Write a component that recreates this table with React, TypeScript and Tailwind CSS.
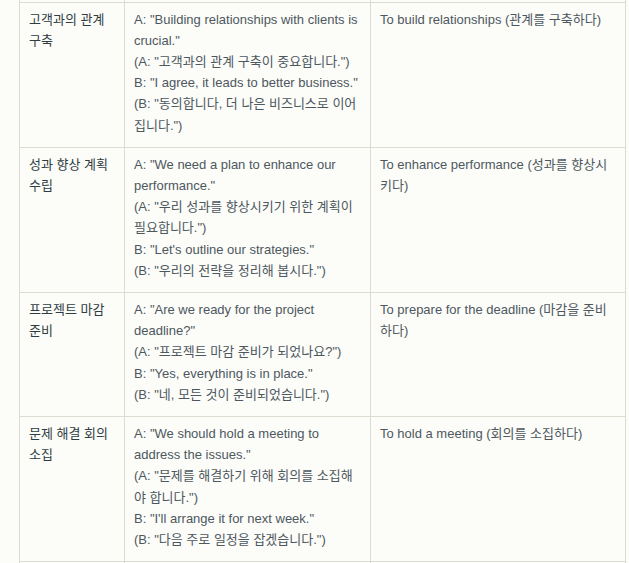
const rows = [
  {
    term: '고객과의 관계 구축',
    lines: [
      'A: "Building relationships with clients is crucial."',
      '(A: "고객과의 관계 구축이 중요합니다.")',
      'B: "I agree, it leads to better business."',
      '(B: "동의합니다, 더 나은 비즈니스로 이어집니다.")',
    ],
    meaning: 'To build relationships (관계를 구축하다)',
  },
  {
    term: '성과 향상 계획 수립',
    lines: [
      'A: "We need a plan to enhance our performance."',
      '(A: "우리 성과를 향상시키기 위한 계획이 필요합니다.")',
      'B: "Let\'s outline our strategies."',
      '(B: "우리의 전략을 정리해 봅시다.")',
    ],
    meaning: 'To enhance performance (성과를 향상시키다)',
  },
  {
    term: '프로젝트 마감 준비',
    lines: [
      'A: "Are we ready for the project deadline?"',
      '(A: "프로젝트 마감 준비가 되었나요?")',
      'B: "Yes, everything is in place."',
      '(B: "네, 모든 것이 준비되었습니다.")',
    ],
    meaning: 'To prepare for the deadline (마감을 준비하다)',
  },
  {
    term: '문제 해결 회의 소집',
    lines: [
      'A: "We should hold a meeting to address the issues."',
      '(A: "문제를 해결하기 위해 회의를 소집해야 합니다.")',
      'B: "I\'ll arrange it for next week."',
      '(B: "다음 주로 일정을 잡겠습니다.")',
    ],
    meaning: 'To hold a meeting (회의를 소집하다)',
  },
]

const cell = 'border border-[#dcdcd3] px-[9px] pt-[6px] pb-[11px] align-top'

export default function App() {
  return (
    <div
      className="min-h-screen bg-[#fcfcf9] pl-[19px] pr-[4px] text-[13px] leading-[21.2px] text-[#4d585e]"
      style={{ fontFamily: '"Liberation Sans", "Noto Sans CJK KR", sans-serif' }}
    >
      <table className="w-[607px] table-fixed border-collapse">
        <colgroup>
          <col className="w-[105px]" />
          <col className="w-[246px]" />
          <col />
        </colgroup>
        <tbody>
          <tr className="h-[2px]">
            <td className="border-x border-[#dcdcd3] p-0" />
            <td className="border-x border-[#dcdcd3] p-0" />
            <td className="border-x border-[#dcdcd3] p-0" />
          </tr>
          {rows.map((r) => (
            <tr key={r.term}>
              <td className={`${cell} text-[#2f3c42]`}>{r.term}</td>
              <td className={cell}>
                {r.lines.map((l) => (
                  <div key={l}>{l}</div>
                ))}
              </td>
              <td className={cell}>{r.meaning}</td>
            </tr>
          ))}
          <tr className="h-[20px]">
            <td className="border-x border-t border-[#dcdcd3] p-0" />
            <td className="border-x border-t border-[#dcdcd3] p-0" />
            <td className="border-x border-t border-[#dcdcd3] p-0" />
          </tr>
        </tbody>
      </table>
    </div>
  )
}
